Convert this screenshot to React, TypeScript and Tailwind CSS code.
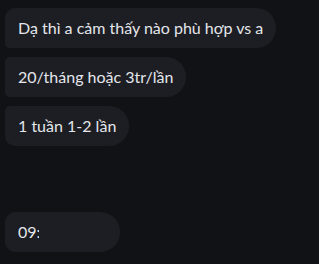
const messages = [
  { text: 'Dạ thì a cảm thấy nào phù hợp vs a', shape: 'rounded-tl-[10px] rounded-bl-[5px]' },
  { text: '20/tháng hoặc 3tr/lần', shape: 'rounded-tl-[5px] rounded-bl-[5px]' },
  { text: '1 tuần 1-2 lần', shape: 'rounded-tl-[5px] rounded-bl-[10px]' },
];

export default function App() {
  return (
    <div
      className="w-[319px] h-[264px] bg-[#111216] overflow-hidden pl-[5px] pt-[8px] text-[#e4e6eb]"
      style={{ fontFamily: 'Lato, "Open Sans", sans-serif' }}
    >
      <div className="flex flex-col items-start gap-[9px]">
        {messages.map((m) => (
          <div
            key={m.text}
            className={`h-[40px] flex items-center px-[13px] bg-[#1c1e23] rounded-r-[20px] text-[16px] ${m.shape}`}
          >
            {m.text}
          </div>
        ))}
      </div>

      {/* last message, partly hidden */}
      <div className="mt-[66px] h-[40px] w-[115px] flex items-center px-[13px] bg-[#1c1e23] rounded-[10px] rounded-r-[20px] text-[16px]">
        <span className="w-[20.5px] overflow-hidden whitespace-nowrap">09:</span>
      </div>
    </div>
  );
}
